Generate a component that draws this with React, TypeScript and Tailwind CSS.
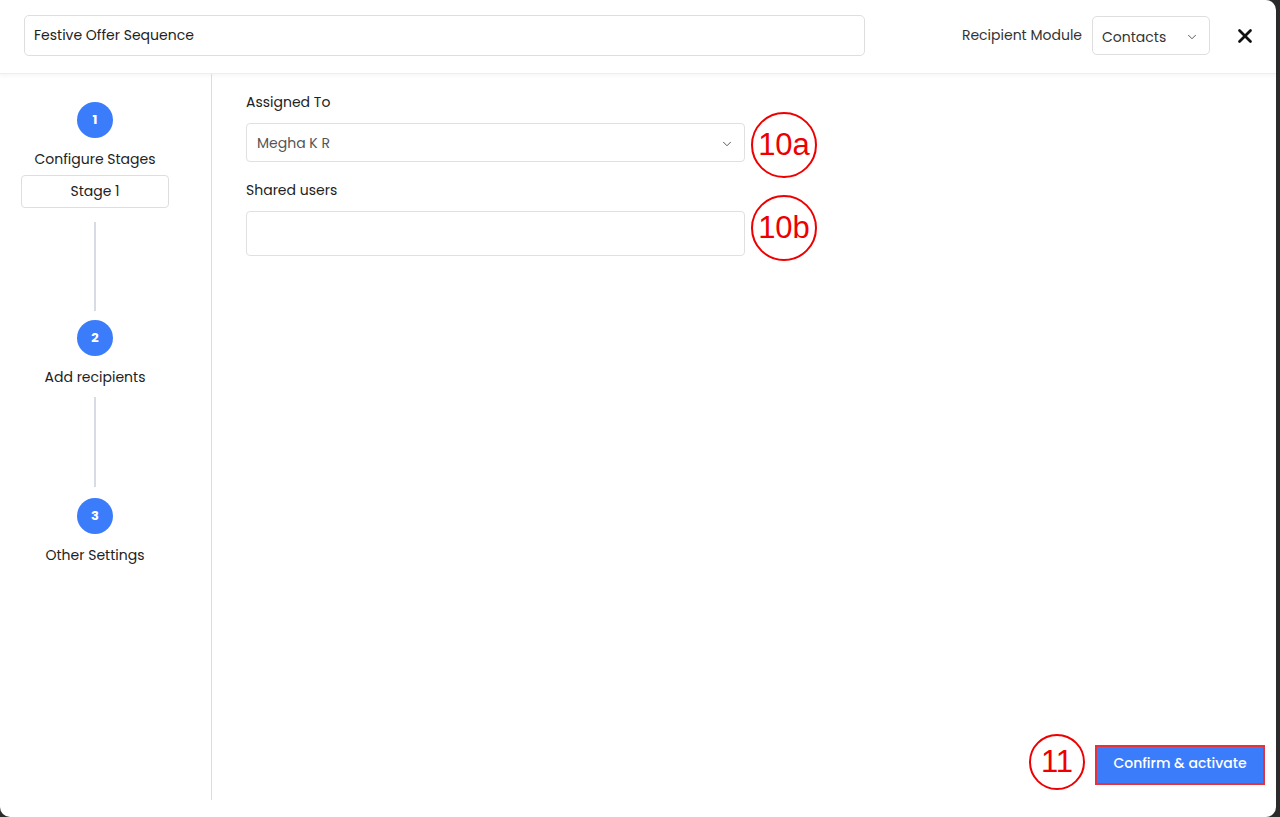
import { ChevronDown, X } from "lucide-react";

const font = { fontFamily: "Poppins, Inter, 'Noto Sans', sans-serif" };

function Step({ n, label }: { n: number; label: string }) {
  return (
    <div className="flex flex-col items-center">
      <div className="flex h-[36px] w-[36px] items-center justify-center rounded-full bg-[#3b7cfb] text-[13px] font-bold text-white">
        {n}
      </div>
      <div className="mt-[11px] text-[14px] text-[#222]">{label}</div>
    </div>
  );
}

function Mark({ text, className }: { text: string; className: string }) {
  return (
    <div
      className={`absolute flex items-center justify-center rounded-full border-[2.5px] border-[#ee0000] text-[#ee0000] ${className}`}
      style={{ fontFamily: "'Liberation Sans', Arial, sans-serif" }}
    >
      {text}
    </div>
  );
}

export default function App() {
  return (
    <div className="h-[817px] w-[1280px] overflow-hidden bg-[#2b2b2b]" style={font}>
      <div className="relative flex h-[817px] w-[1276px] flex-col rounded-r-[10px] rounded-bl-[10px] bg-white">
        <header className="flex h-[74px] shrink-0 items-center border-b border-[#eeeeee] pb-[2px] pl-[24px] pr-[20px] shadow-[0_2px_4px_rgba(0,0,0,0.04)]">
          <div className="flex h-[41px] w-[841px] items-center rounded-[5px] border border-[#dedede] px-[9px] text-[14px] text-[#222]">
            Festive Offer Sequence
          </div>
          <div className="ml-auto flex items-center">
            <span className="mr-[10px] text-[14px] text-[#333]">Recipient Module</span>
            <div className="flex h-[39px] w-[118px] items-center justify-between rounded-[5px] border border-[#dedede] pl-[9px] pr-[10px] pt-[3px] text-[14px] text-[#333]">
              Contacts
              <ChevronDown size={14} strokeWidth={1.5} className="text-[#444]" />
            </div>
            <X size={22} strokeWidth={3} className="ml-[24px] text-[#111]" />
          </div>
        </header>

        <div className="flex min-h-0 flex-1">
          <aside className="mb-[17px] flex w-[212px] shrink-0 flex-col items-center border-r border-[#dcdce0] pt-[28px]">
            <div className="flex w-full flex-col items-center pl-[1px] pr-[22px]">
              <Step n={1} label="Configure Stages" />
              <div className="mt-[5px] flex h-[33px] w-[148px] items-center justify-center rounded-[4px] border border-[#dedede] text-[14px] text-[#222]">
                Stage 1
              </div>
              <div className="mt-[14px] h-[89px] w-[2px] bg-[#d6dbe6]" />
              <div className="mt-[9px]">
                <Step n={2} label="Add recipients" />
              </div>
              <div className="mt-[9px] h-[90px] w-[2px] bg-[#d6dbe6]" />
              <div className="mt-[11px]">
                <Step n={3} label="Other Settings" />
              </div>
            </div>
          </aside>

          <main className="relative flex-1 pl-[34px] pt-[18px]">
            <div className="text-[14px] text-[#222]">Assigned To</div>
            <div className="mt-[10px] flex h-[39px] w-[499px] items-center justify-between rounded-[4px] border border-[#e0e0e0] pl-[10px] pr-[10px] pt-[2px] text-[14px] text-[#555]">
              Megha K R
              <ChevronDown size={14} strokeWidth={1.5} className="text-[#444]" />
            </div>
            <div className="mt-[18px] text-[14px] text-[#222]">Shared users</div>
            <div className="mt-[10px] h-[45px] w-[499px] rounded-[4px] border border-[#e0e0e0]" />

            <div className="absolute bottom-[32px] right-[11px] border-[2px] border-[#e8323a]">
              <button className="flex h-[36px] w-[166px] items-center justify-center pb-[3px] bg-[#3b7cfb] text-[14px] font-medium text-white">
                Confirm &amp; activate
              </button>
            </div>
          </main>
        </div>

        <Mark text="10a" className="left-[751px] top-[112px] h-[66px] w-[66px] text-[31px]" />
        <Mark text="10b" className="left-[751px] top-[195px] h-[66px] w-[66px] text-[31px]" />
        <Mark text="11" className="left-[1029px] top-[734px] h-[56px] w-[56px] text-[31px]" />
      </div>
    </div>
  );
}
